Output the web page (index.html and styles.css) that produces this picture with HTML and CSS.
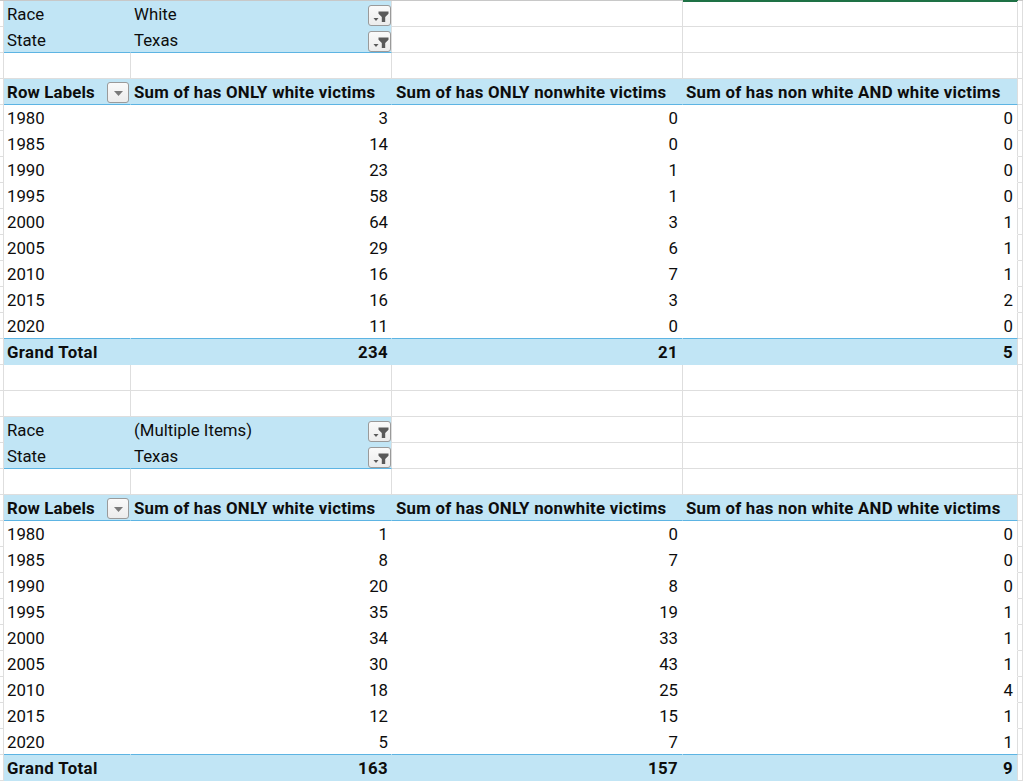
FILE: index.html
```html
<!DOCTYPE html>
<html lang="en">
<head>
<meta charset="utf-8">
<title>Pivot</title>
<link rel="stylesheet" href="styles.css">
</head>
<body>
<div class="sheet">
  <div class="topline"><div class="t0"></div><div class="tg"></div><div class="t1"></div></div>

  <!-- Pivot 1 -->
  <div class="r"><div class="c c0"></div><div class="c ca f">Race</div><div class="c cb f filt"><span>White</span><span class="fbtn"><svg width="20" height="18" viewBox="0 0 20 18"><path d="M3.5 11h5l-2.5 3z" fill="#5a5a5a"/><path d="M8.5 4.5h10v2.2l-3.3 3.3v5h-3.4v-5l-3.3-3.3z" fill="#5a5a5a"/></svg></span></div><div class="c cc"></div><div class="c cd sel"></div><div class="c ce"></div></div>
  <div class="r"><div class="c c0"></div><div class="c ca f fb">State</div><div class="c cb f fb filt"><span>Texas</span><span class="fbtn"><svg width="20" height="18" viewBox="0 0 20 18"><path d="M3.5 11h5l-2.5 3z" fill="#5a5a5a"/><path d="M8.5 4.5h10v2.2l-3.3 3.3v5h-3.4v-5l-3.3-3.3z" fill="#5a5a5a"/></svg></span></div><div class="c cc"></div><div class="c cd"></div><div class="c ce"></div></div>
  <div class="r"><div class="c c0"></div><div class="c ca"></div><div class="c cb"></div><div class="c cc"></div><div class="c cd"></div><div class="c ce"></div></div>
  <div class="r hd"><div class="c c0"></div><div class="c ca h rl"><span>Row Labels</span><span class="dbtn"><svg width="19" height="18" viewBox="0 0 19 18"><path d="M5 7h9l-4.5 5z" fill="#7a7a7a"/></svg></span></div><div class="c cb h">Sum of has ONLY white victims</div><div class="c cc h">Sum of has ONLY nonwhite victims</div><div class="c cd h">Sum of has non white AND white victims</div><div class="c ce"></div></div>
  <div class="r"><div class="c c0"></div><div class="c ca w">1980</div><div class="c cb w n">3</div><div class="c cc w n">0</div><div class="c cd w n">0</div><div class="c ce"></div></div>
  <div class="r"><div class="c c0"></div><div class="c ca w">1985</div><div class="c cb w n">14</div><div class="c cc w n">0</div><div class="c cd w n">0</div><div class="c ce"></div></div>
  <div class="r"><div class="c c0"></div><div class="c ca w">1990</div><div class="c cb w n">23</div><div class="c cc w n">1</div><div class="c cd w n">0</div><div class="c ce"></div></div>
  <div class="r"><div class="c c0"></div><div class="c ca w">1995</div><div class="c cb w n">58</div><div class="c cc w n">1</div><div class="c cd w n">0</div><div class="c ce"></div></div>
  <div class="r"><div class="c c0"></div><div class="c ca w">2000</div><div class="c cb w n">64</div><div class="c cc w n">3</div><div class="c cd w n">1</div><div class="c ce"></div></div>
  <div class="r"><div class="c c0"></div><div class="c ca w">2005</div><div class="c cb w n">29</div><div class="c cc w n">6</div><div class="c cd w n">1</div><div class="c ce"></div></div>
  <div class="r"><div class="c c0"></div><div class="c ca w">2010</div><div class="c cb w n">16</div><div class="c cc w n">7</div><div class="c cd w n">1</div><div class="c ce"></div></div>
  <div class="r"><div class="c c0"></div><div class="c ca w">2015</div><div class="c cb w n">16</div><div class="c cc w n">3</div><div class="c cd w n">2</div><div class="c ce"></div></div>
  <div class="r"><div class="c c0"></div><div class="c ca w wl">2020</div><div class="c cb w wl n">11</div><div class="c cc w wl n">0</div><div class="c cd w wl n">0</div><div class="c ce"></div></div>
  <div class="r"><div class="c c0"></div><div class="c ca g">Grand Total</div><div class="c cb g n">234</div><div class="c cc g n">21</div><div class="c cd g n">5</div><div class="c ce"></div></div>
  <div class="r"><div class="c c0"></div><div class="c ca"></div><div class="c cb"></div><div class="c cc"></div><div class="c cd"></div><div class="c ce"></div></div>
  <div class="r"><div class="c c0"></div><div class="c ca"></div><div class="c cb"></div><div class="c cc"></div><div class="c cd"></div><div class="c ce"></div></div>

  <!-- Pivot 2 -->
  <div class="r"><div class="c c0"></div><div class="c ca f">Race</div><div class="c cb f filt"><span>(Multiple Items)</span><span class="fbtn"><svg width="20" height="18" viewBox="0 0 20 18"><path d="M3.5 11h5l-2.5 3z" fill="#5a5a5a"/><path d="M8.5 4.5h10v2.2l-3.3 3.3v5h-3.4v-5l-3.3-3.3z" fill="#5a5a5a"/></svg></span></div><div class="c cc"></div><div class="c cd"></div><div class="c ce"></div></div>
  <div class="r"><div class="c c0"></div><div class="c ca f fb">State</div><div class="c cb f fb filt"><span>Texas</span><span class="fbtn"><svg width="20" height="18" viewBox="0 0 20 18"><path d="M3.5 11h5l-2.5 3z" fill="#5a5a5a"/><path d="M8.5 4.5h10v2.2l-3.3 3.3v5h-3.4v-5l-3.3-3.3z" fill="#5a5a5a"/></svg></span></div><div class="c cc"></div><div class="c cd"></div><div class="c ce"></div></div>
  <div class="r"><div class="c c0"></div><div class="c ca"></div><div class="c cb"></div><div class="c cc"></div><div class="c cd"></div><div class="c ce"></div></div>
  <div class="r hd"><div class="c c0"></div><div class="c ca h rl"><span>Row Labels</span><span class="dbtn"><svg width="19" height="18" viewBox="0 0 19 18"><path d="M5 7h9l-4.5 5z" fill="#7a7a7a"/></svg></span></div><div class="c cb h">Sum of has ONLY white victims</div><div class="c cc h">Sum of has ONLY nonwhite victims</div><div class="c cd h">Sum of has non white AND white victims</div><div class="c ce"></div></div>
  <div class="r"><div class="c c0"></div><div class="c ca w">1980</div><div class="c cb w n">1</div><div class="c cc w n">0</div><div class="c cd w n">0</div><div class="c ce"></div></div>
  <div class="r"><div class="c c0"></div><div class="c ca w">1985</div><div class="c cb w n">8</div><div class="c cc w n">7</div><div class="c cd w n">0</div><div class="c ce"></div></div>
  <div class="r"><div class="c c0"></div><div class="c ca w">1990</div><div class="c cb w n">20</div><div class="c cc w n">8</div><div class="c cd w n">0</div><div class="c ce"></div></div>
  <div class="r"><div class="c c0"></div><div class="c ca w">1995</div><div class="c cb w n">35</div><div class="c cc w n">19</div><div class="c cd w n">1</div><div class="c ce"></div></div>
  <div class="r"><div class="c c0"></div><div class="c ca w">2000</div><div class="c cb w n">34</div><div class="c cc w n">33</div><div class="c cd w n">1</div><div class="c ce"></div></div>
  <div class="r"><div class="c c0"></div><div class="c ca w">2005</div><div class="c cb w n">30</div><div class="c cc w n">43</div><div class="c cd w n">1</div><div class="c ce"></div></div>
  <div class="r"><div class="c c0"></div><div class="c ca w">2010</div><div class="c cb w n">18</div><div class="c cc w n">25</div><div class="c cd w n">4</div><div class="c ce"></div></div>
  <div class="r"><div class="c c0"></div><div class="c ca w">2015</div><div class="c cb w n">12</div><div class="c cc w n">15</div><div class="c cd w n">1</div><div class="c ce"></div></div>
  <div class="r"><div class="c c0"></div><div class="c ca w wl">2020</div><div class="c cb w wl n">5</div><div class="c cc w wl n">7</div><div class="c cd w wl n">1</div><div class="c ce"></div></div>
  <div class="r"><div class="c c0"></div><div class="c ca g">Grand Total</div><div class="c cb g n">163</div><div class="c cc g n">157</div><div class="c cd g n">9</div><div class="c ce"></div></div>
</div>
</body>
</html>
```

FILE: styles.css
```css
html, body {
  margin: 0;
  padding: 0;
  background: #ffffff;
}

body {
  font-family: Roboto, "Liberation Sans", Arial, sans-serif;
  font-size: 16.8px;
  color: #0d0d0d;
  overflow: hidden;
}

.sheet {
  width: 1023px;
  height: 783px;
  overflow: hidden;
}

.topline {
  display: flex;
  height: 1px;
}
.topline .t0 { width: 683px; background: #c8c8c8; }
.topline .tg { width: 335px; background: #1e7145; }
.topline .t1 { flex: 1; background: #c8c8c8; }

.r {
  display: flex;
  height: 26px;
}

.c {
  box-sizing: border-box;
  height: 26px;
  border-right: 1px solid #dedede;
  border-bottom: 1px solid #dedede;
  padding: 2px 3px 0 3px;
  line-height: 23px;
  white-space: nowrap;
  overflow: hidden;
}

.c0 { width: 4px; padding: 0; }
.ca { width: 127px; }
.cb { width: 261px; }
.cc { width: 291px; }
.cd { width: 335px; }
.ce { flex: 1; padding: 0; }

.sel { box-shadow: inset 0 1px 0 #1e7145; }

/* filter area */
.f {
  background: #c1e5f5;
  border-right-color: transparent;
  border-bottom-color: transparent;
}
.cb.f { border-right-color: #dedede; }
.f.fb { border-bottom-color: #5db4e3; }

.filt {
  display: flex;
  justify-content: space-between;
  align-items: flex-start;
  padding-right: 0;
}

.fbtn {
  box-sizing: border-box;
  width: 23px;
  height: 21px;
  margin-top: 2px;
  border: 1px solid #9a9a9a;
  border-radius: 3px;
  background: linear-gradient(#fafafa, #ececec);
  display: flex;
  align-items: center;
  justify-content: center;
}
.fbtn svg { display: block; }

/* header row */
.h {
  background: #c1e5f5;
  font-weight: 700;
  letter-spacing: 0.25px;
  border-right-color: transparent;
  border-bottom-color: #5db4e3;
}
.cd.h { border-right-color: #dedede; }
.cc.h { padding-left: 4px; }

.rl {
  display: flex;
  justify-content: space-between;
  align-items: flex-start;
  padding-right: 1px;
  letter-spacing: 0.15px;
}
.dbtn {
  box-sizing: border-box;
  width: 22px;
  height: 21px;
  margin-top: 1px;
  border: 1px solid #9a9a9a;
  border-radius: 3px;
  background: linear-gradient(#fafafa, #ececec);
  display: flex;
  align-items: center;
  justify-content: center;
}
.dbtn svg { display: block; }

/* data rows */
.w {
  background: #ffffff;
  border-right-color: transparent;
  border-bottom-color: transparent;
}
.cd.w { border-right-color: #dedede; }
.w.wl { border-bottom-color: #5db4e3; }

.n { text-align: right; padding-right: 3px; }
.cc.n, .cd.n { padding-right: 4px; }

/* grand total */
.g {
  background: #c1e5f5;
  font-weight: 700;
  letter-spacing: 0.4px;
  border-right-color: transparent;
  border-bottom-color: transparent;
}
.cd.g { border-right-color: #dedede; }
```
